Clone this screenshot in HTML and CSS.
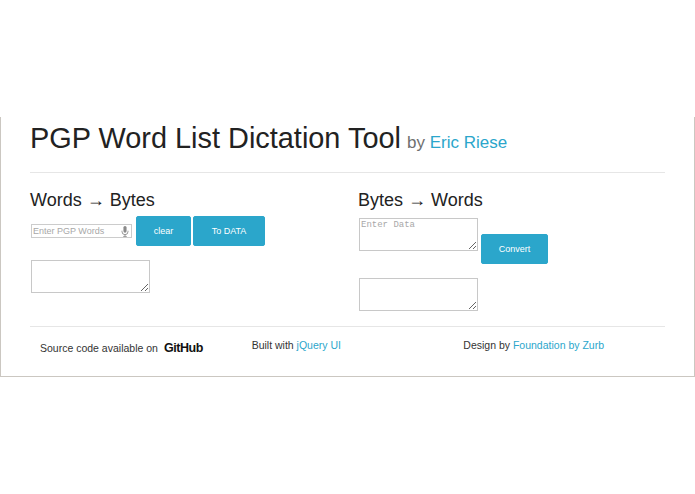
FILE: index.html
```html
<!DOCTYPE html>
<html lang="en">
<head>
<meta charset="utf-8">
<title>PGP Word List Dictation Tool</title>
<link rel="stylesheet" href="styles.css">
</head>
<body>
<main class="frame">
  <header class="masthead">
    <h1 class="title">PGP Word List Dictation Tool <small class="byline">by <a href="#">Eric Riese</a></small></h1>
  </header>
  <section class="tools">
    <div class="tool">
      <h2 class="tool-title">Words → Bytes</h2>
      <div class="words-row">
        <div class="speech">
          <input class="speech-input" type="text" placeholder="Enter PGP Words">
          <svg class="mic" viewBox="0 0 10 14" width="8" height="11" aria-hidden="true"><rect x="3" y="0" width="4" height="8.5" rx="2" fill="#8a8a8a"/><path d="M1.2 6v1.2a3.8 3.8 0 0 0 7.6 0V6M5 11v2M2.8 13.3h4.4" fill="none" stroke="#8a8a8a" stroke-width="1.1"/></svg>
        </div>
        <button class="btn btn-clear" type="button">clear</button>
        <button class="btn btn-data" type="button">To DATA</button>
      </div>
      <textarea class="box box-out-left"></textarea>
    </div>
    <div class="tool">
      <h2 class="tool-title">Bytes → Words</h2>
      <div class="bytes-row">
        <textarea class="box" placeholder="Enter Data"></textarea>
        <button class="btn btn-convert" type="button">Convert</button>
      </div>
      <textarea class="box box-out-right"></textarea>
    </div>
  </section>
  <footer class="foot">
    <div class="foot-col foot-source">Source code available on <a class="github" href="#">GitHub</a></div>
    <div class="foot-col">Built with <a href="#">jQuery UI</a></div>
    <div class="foot-col">Design by <a href="#">Foundation by Zurb</a></div>
  </footer>
</main>
</body>
</html>
```

FILE: styles.css
```css
* { box-sizing: border-box; }
html, body { margin: 0; background: #fff; }
body {
  padding-top: 117px;
  font-family: "Liberation Sans", Arial, sans-serif;
  color: #222;
}
a { color: #2ba6cb; text-decoration: none; }
.frame {
  width: 695px;
  height: 260px;
  padding: 0 29px;
  border: 1px solid #cbc7c1;
  border-top: 0;
}
.masthead {
  height: 56px;
  border-bottom: 1px solid #e6e6e6;
  padding-top: 3px;
}
.title {
  margin: 0;
  font-size: 28.9px;
  line-height: 36px;
  font-weight: 400;
  color: #222;
  white-space: nowrap;
}
.byline { font-size: 17px; margin-left: -2px; color: #6f6f6f; }
.tools {
  display: grid;
  grid-template-columns: 328px 1fr;
  height: 154px;
  border-bottom: 1px solid #e6e6e6;
}
.tool { padding-top: 15px; }
.tool-title {
  margin: 0;
  font-size: 18px;
  line-height: 24px;
  font-weight: 400;
  color: #222;
}
.words-row {
  display: flex;
  align-items: center;
  margin-top: 4px;
  margin-left: 1px;
}
.speech {
  position: relative;
  width: 101px;
  height: 14px;
  margin-right: 4px;
}
.speech-input {
  display: block;
  width: 100%;
  height: 100%;
  padding: 0 14px 0 1px;
  border: 1px solid #ccc;
  font: 9px "Liberation Sans", Arial, sans-serif;
  color: #222;
  background: #fff;
}
.speech-input::placeholder { color: #a8a8a8; opacity: 1; }
.mic { position: absolute; right: 3px; top: 2px; }
.btn {
  display: block;
  height: 30px;
  padding: 0;
  border: 1px solid #2ba6cb;
  border-radius: 2px;
  background: #2ba6cb;
  color: #fff;
  font: 9px "Liberation Sans", Arial, sans-serif;
}
.btn-clear { width: 55px; margin-right: 2px; }
.btn-data { width: 72px; }
.btn-convert { width: 67px; margin: 16px 0 0 3px; }
.box {
  display: block;
  width: 119px;
  height: 33px;
  margin: 0;
  padding: 1px;
  border: 1px solid #c8c8c8;
  background: #fff;
  font: 9px "Liberation Mono", monospace;
  color: #222;
}
.box::placeholder { color: #a8a8a8; opacity: 1; }
.box-out-left { margin: 14px 0 0 1px; }
.box-out-right { margin-top: 14px; margin-left: 1px; }
.bytes-row { display: flex; margin-top: 6px; margin-left: 1px; }
.foot {
  display: grid;
  grid-template-columns: repeat(3, 1fr);
  font-size: 10.5px;
  color: #333;
}
.foot-col { padding: 11px 10px 0; line-height: 14px; }
.foot-source { display: flex; align-items: center; height: 28px; padding-top: 14px; }
.github {
  margin-left: 6px;
  font: 700 12.5px "Liberation Sans", sans-serif;
  letter-spacing: -0.45px;
  color: #111;
}
```
